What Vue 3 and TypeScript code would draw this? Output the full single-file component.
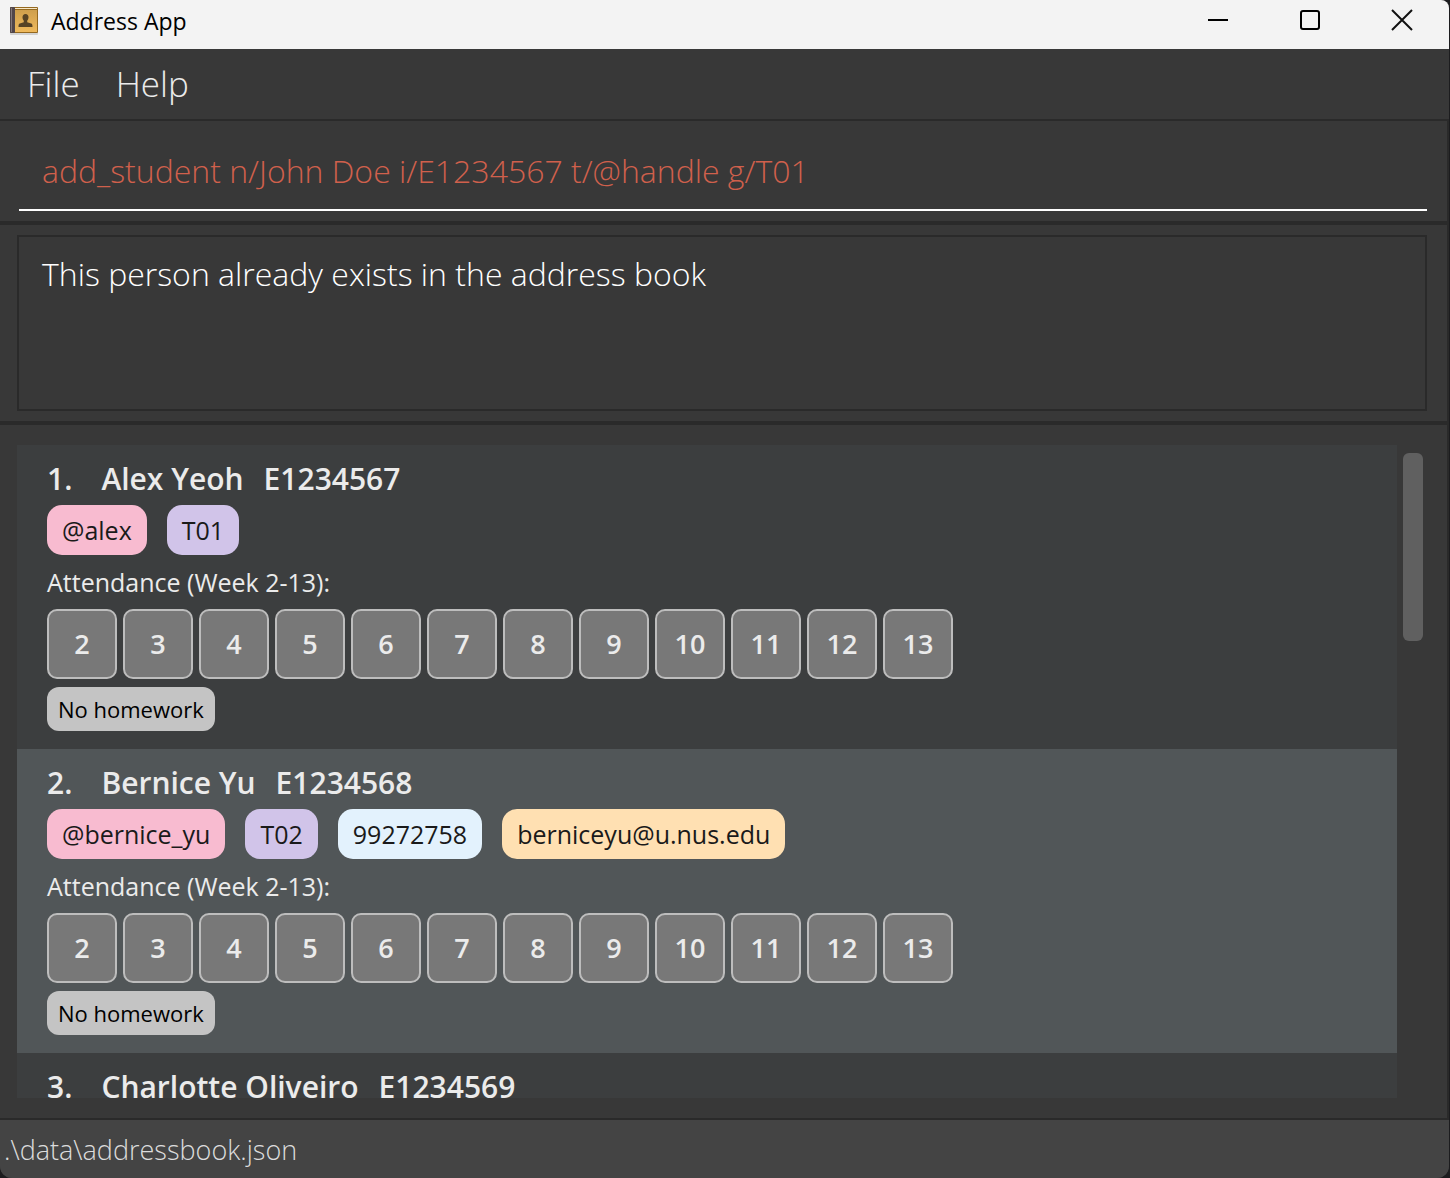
<script setup lang="ts">
import { ref } from 'vue'

interface Tag {
  kind: 'handle' | 'group' | 'phone' | 'email'
  text: string
}

interface Student {
  name: string
  id: string
  tags?: Tag[]
}

const command = ref('add_student n/John Doe i/E1234567 t/@handle g/T01')
const result = ref('This person already exists in the address book')
const weeks = Array.from({ length: 12 }, (_, i) => i + 2)

const students: Student[] = [
  {
    name: 'Alex Yeoh',
    id: 'E1234567',
    tags: [
      { kind: 'handle', text: '@alex' },
      { kind: 'group', text: 'T01' },
    ],
  },
  {
    name: 'Bernice Yu',
    id: 'E1234568',
    tags: [
      { kind: 'handle', text: '@bernice_yu' },
      { kind: 'group', text: 'T02' },
      { kind: 'phone', text: '99272758' },
      { kind: 'email', text: 'berniceyu@u.nus.edu' },
    ],
  },
  { name: 'Charlotte Oliveiro', id: 'E1234569' },
]
</script>

<template>
  <div class="window">
    <header class="titlebar">
      <svg class="app-icon" width="30" height="30" viewBox="0 0 30 30" aria-hidden="true">
        <defs>
          <linearGradient id="cover" x1="0" y1="0" x2="0" y2="1">
            <stop offset="0" stop-color="#cf9f4c" />
            <stop offset="1" stop-color="#efb95c" />
          </linearGradient>
        </defs>
        <rect x="1" y="26" width="28" height="3" rx="1" fill="#d2d2d2" />
        <rect x="1" y="1" width="28" height="26" rx="1" fill="#94681f" />
        <rect x="5" y="2" width="23" height="1" fill="#f6e6c4" />
        <rect x="5" y="4" width="23" height="22" fill="url(#cover)" />
        <rect x="1" y="1" width="5" height="26" rx="1" fill="#51464a" />
        <rect x="2" y="2" width="1" height="24" fill="#82777a" />
        <path
          d="M16.500 8c2 0 3 1.300 3 3.200 0 1.600-.6 2.700-1.300 3.500v1.600l4 1.300c1 .4 1.300 1 1.300 3.400h-14c0-2.400.3-3 1.300-3.400l4-1.300v-1.600c-.7-.8-1.300-1.900-1.300-3.500 0-1.900 1-3.200 3-3.200z"
          fill="#574325"
        />
      </svg>
      <span class="app-name">Address App</span>
      <div class="controls">
        <button type="button" aria-label="Minimize">
          <svg width="22" height="22" viewBox="0 0 22 22"><path d="M1 11h20" stroke="#000" stroke-width="2" /></svg>
        </button>
        <button type="button" aria-label="Maximize">
          <svg width="22" height="22" viewBox="0 0 22 22"><rect x="2" y="2" width="18" height="18" rx="2" fill="none" stroke="#000" stroke-width="2" /></svg>
        </button>
        <button type="button" aria-label="Close">
          <svg width="22" height="22" viewBox="0 0 22 22"><path d="M1 1l20 20M21 1L1 21" stroke="#111" stroke-width="2" /></svg>
        </button>
      </div>
    </header>

    <nav class="menubar">
      <button type="button">File</button>
      <button type="button">Help</button>
    </nav>

    <div class="body">
      <section class="command-pane">
        <input v-model="command" type="text" aria-label="Command" spellcheck="false" />
      </section>

      <section class="result-pane">
        <textarea v-model="result" aria-label="Result" readonly spellcheck="false"></textarea>
      </section>

      <main class="list-pane">
        <ol class="students">
          <li v-for="(student, index) in students" :key="student.id" class="card">
            <h2>
              <span class="index">{{ index + 1 }}.</span>
              <span class="name">{{ student.name }}</span>
              <span>{{ student.id }}</span>
            </h2>
            <template v-if="student.tags">
              <div class="tags">
                <span v-for="tag in student.tags" :key="tag.text" class="tag" :class="tag.kind">{{ tag.text }}</span>
              </div>
              <p class="label">Attendance (Week 2-13):</p>
              <div class="weeks">
                <span v-for="week in weeks" :key="week" class="week">{{ week }}</span>
              </div>
              <span class="homework">No homework</span>
            </template>
          </li>
        </ol>
        <div class="scrollbar"><div class="thumb"></div></div>
      </main>
    </div>

    <footer class="statusbar">.\data\addressbook.json</footer>
  </div>
</template>

<style>
body {
  margin: 0;
  background: #1c1c1e;
}
</style>

<style scoped>
* {
  box-sizing: border-box;
}

.window {
  display: flex;
  flex-direction: column;
  height: 100vh;
  margin-right: 1px;
  overflow: hidden;
  border-radius: 0 8px 12px 12px;
  background: #383838;
  color: #ebebeb;
  font-family: 'Open Sans', 'Noto Sans', sans-serif;
}

button {
  padding: 0;
  border: 0;
  background: none;
  color: inherit;
  font: inherit;
}

.titlebar {
  display: flex;
  flex: none;
  align-items: center;
  height: 49px;
  padding: 0 1px 8px 9px;
  background: #f3f3f3;
  color: #000;
}

.app-name {
  margin-left: 12px;
  font-size: 23px;
  line-height: 36px;
}

.controls {
  display: flex;
  align-self: flex-start;
  margin-left: auto;
}

.controls button {
  display: flex;
  align-items: center;
  justify-content: center;
  width: 92px;
  height: 40px;
}

.menubar {
  display: flex;
  flex: none;
  gap: 36px;
  height: 70px;
  padding-left: 27px;
  font-size: 35px;
  font-weight: 300;
  line-height: 70px;
}

.body {
  display: flex;
  flex: 1;
  flex-direction: column;
  min-height: 0;
  border: solid #2a2a2a;
  border-width: 2px 2px 2px 0;
}

.command-pane {
  height: 104px;
  padding: 10px 20px 10px 19px;
  border-bottom: 4px solid #2a2a2a;
}

.command-pane input {
  display: block;
  width: 100%;
  height: 80px;
  padding: 0 23px;
  border: 0;
  border-bottom: 2px solid #fff;
  outline: 0;
  background: transparent;
  color: #d0604c;
  font: 300 32px 'Open Sans', 'Noto Sans', sans-serif;
}

.result-pane {
  height: 200px;
  padding: 10px 20px 10px 17px;
  border-bottom: 4px solid #2a2a2a;
}

.result-pane textarea {
  display: block;
  width: 100%;
  height: 176px;
  padding: 13px 23px;
  border: 2px solid #2a2a2a;
  outline: 0;
  background: transparent;
  color: #fff;
  font: 300 32px/48px 'Open Sans', 'Noto Sans', sans-serif;
  resize: none;
}

.list-pane {
  display: flex;
  flex: 1;
  gap: 6px;
  min-height: 0;
  padding: 20px 24px 20px 17px;
}

.students {
  flex: 1;
  margin: 0;
  padding: 0;
  overflow: hidden;
  list-style: none;
}

.card {
  height: 304px;
  padding: 10px 30px 18px;
  background: #3c3e3f;
}

.card:nth-child(even) {
  background: #515658;
}

h2 {
  display: flex;
  margin: 0 0 2px;
  font-size: 30px;
  font-weight: 600;
  line-height: 48px;
}

.index {
  margin-right: 29px;
}

.name {
  margin-right: 20px;
}

.tags {
  display: flex;
  gap: 20px;
  height: 50px;
}

.tag {
  padding: 0 15px;
  border-radius: 15px;
  color: #1a1a1a;
  font-size: 25px;
  line-height: 50px;
}

.handle {
  background: #f8bbd0;
}

.group {
  background: #d1c4e9;
}

.phone {
  background: #e3f2fd;
}

.email {
  background: #ffe0b2;
}

.label {
  margin: 0;
  font-size: 25px;
  line-height: 54px;
}

.weeks {
  display: flex;
  gap: 6px;
  margin-bottom: 8px;
}

.week {
  width: 70px;
  height: 70px;
  border: 2px solid #bdbdbd;
  border-radius: 10px;
  background: #787878;
  font-size: 27px;
  font-weight: 600;
  line-height: 66px;
  text-align: center;
}

.homework {
  display: inline-block;
  padding: 0 11px;
  border-radius: 12px;
  background: #c4c4c4;
  color: #000;
  font-size: 22px;
  font-weight: 500;
  line-height: 44px;
}

.scrollbar {
  width: 20px;
  padding: 8px 0;
}

.thumb {
  height: 188px;
  border-radius: 6px;
  background: #606060;
}

.statusbar {
  flex: none;
  height: 58px;
  padding-left: 4px;
  background: #444;
  color: #dcdcdc;
  font-size: 27px;
  font-weight: 300;
  line-height: 60px;
}
</style>
